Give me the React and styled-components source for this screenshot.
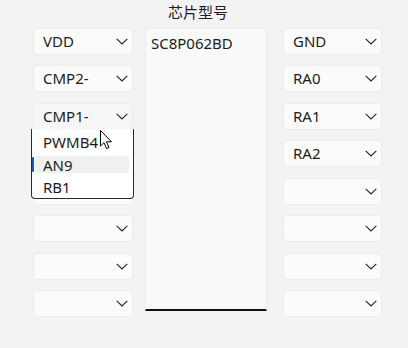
import React from "react";
import styled, { createGlobalStyle } from "styled-components";

const GlobalStyle = createGlobalStyle`
  html, body {
    margin: 0;
    background: #f3f3f3;
  }
  body {
    font-family: "Noto Sans", "Noto Sans CJK SC", sans-serif;
    color: #1b1b1b;
  }
`;

const Page = styled.div`
  width: 408px;
  height: 348px;
  box-sizing: border-box;
  padding-left: 33px;
  display: grid;
  grid-template-columns: 100px 12px 122px 16px 99px;
  grid-template-rows: 28px 283px;
  grid-template-areas:
    ". . title . ."
    "left . chip . right";
  align-items: start;
`;

const Title = styled.div`
  grid-area: title;
  font-family: "Noto Sans CJK SC", "Noto Sans", sans-serif;
  font-size: 15px;
  line-height: 24px;
  padding-left: 23px;
  white-space: nowrap;
`;

const Column = styled.div`
  grid-area: ${(p) => p.$area};
  display: flex;
  flex-direction: column;
  gap: 10.43px;
`;

const Combo = styled.div`
  position: relative;
  height: 27px;
  box-sizing: border-box;
  border: 1px solid #ececec;
  border-radius: 4px;
  background: ${(p) => (p.$hover ? "#f6f6f6" : "#fbfbfb")};
  display: flex;
  align-items: center;
  justify-content: space-between;
  padding: 0 4px 0 9px;
  font-size: 15px;
`;

const Value = styled.span`
  line-height: 1;
`;

const Chevron = () => (
  <svg width="12" height="7" viewBox="0 0 12 7" fill="none">
    <path d="M0.7 0.8 L6 6 L11.3 0.8" stroke="#222" strokeWidth="1.1" />
  </svg>
);

const Popup = styled.div`
  position: absolute;
  left: -3px;
  top: 25px;
  width: 103px;
  height: 70px;
  box-sizing: border-box;
  background: #fff;
  border: 1px solid #2a2a2a;
  border-top: none;
  border-radius: 0 0 4px 4px;
  padding-top: 2px;
  display: flex;
  flex-direction: column;
  z-index: 2;
`;

const Item = styled.div`
  position: relative;
  flex: none;
  height: 17px;
  margin: 2.75px 4px 2.75px 3px;
  padding-left: 8px;
  display: flex;
  align-items: center;
  font-size: 15px;
  border-radius: 3px;
  background: ${(p) => (p.$active ? "#f0f0f0" : "transparent")};
  &::before {
    content: "";
    display: ${(p) => (p.$active ? "block" : "none")};
    position: absolute;
    left: -3px;
    top: 1px;
    width: 2px;
    height: 15px;
    background: #005fb8;
    border-radius: 1px;
  }
`;

const Cursor = styled.svg`
  position: absolute;
  left: 66px;
  top: 26px;
  z-index: 3;
`;

const ChipText = styled.textarea`
  grid-area: chip;
  display: block;
  width: 122px;
  height: 283px;
  box-sizing: border-box;
  margin: 0;
  padding: 4px 5px;
  resize: none;
  outline: none;
  border: 1px solid #ececec;
  border-bottom: 2px solid #111;
  border-radius: 4px 4px 0 0;
  background: #f9f9f9;
  font-family: "Noto Sans", sans-serif;
  font-size: 15px;
  line-height: 20px;
  color: #1b1b1b;
`;

const left = ["VDD", "CMP2-", "CMP1-", "", "", "", "", ""];
const right = ["GND", "RA0", "RA1", "RA2", "", "", "", ""];

export default function App() {
  return (
    <>
      <GlobalStyle />
      <Page>
        <Title>芯片型号</Title>
        <Column $area="left">
          {left.map((v, i) => (
            <Combo key={i} $hover={i === 2}>
              <Value>{v}</Value>
              <Chevron />
              {i === 2 && (
                <>
                  <Popup>
                    <Item>PWMB4</Item>
                    <Item $active>AN9</Item>
                    <Item>RB1</Item>
                  </Popup>
                  <Cursor width="13" height="20" viewBox="0 0 13 20">
                    <path
                      d="M0.5 0.5 L0.5 16 L4 12.6 L6.6 18.6 L9 17.6 L6.5 11.8 L11.5 11.8 Z"
                      fill="#fff"
                      stroke="#000"
                      strokeWidth="1"
                      strokeLinejoin="round"
                    />
                  </Cursor>
                </>
              )}
            </Combo>
          ))}
        </Column>
        <ChipText readOnly defaultValue="SC8P062BD" />
        <Column $area="right">
          {right.map((v, i) => (
            <Combo key={i}>
              <Value>{v}</Value>
              <Chevron />
            </Combo>
          ))}
        </Column>
      </Page>
    </>
  );
}
